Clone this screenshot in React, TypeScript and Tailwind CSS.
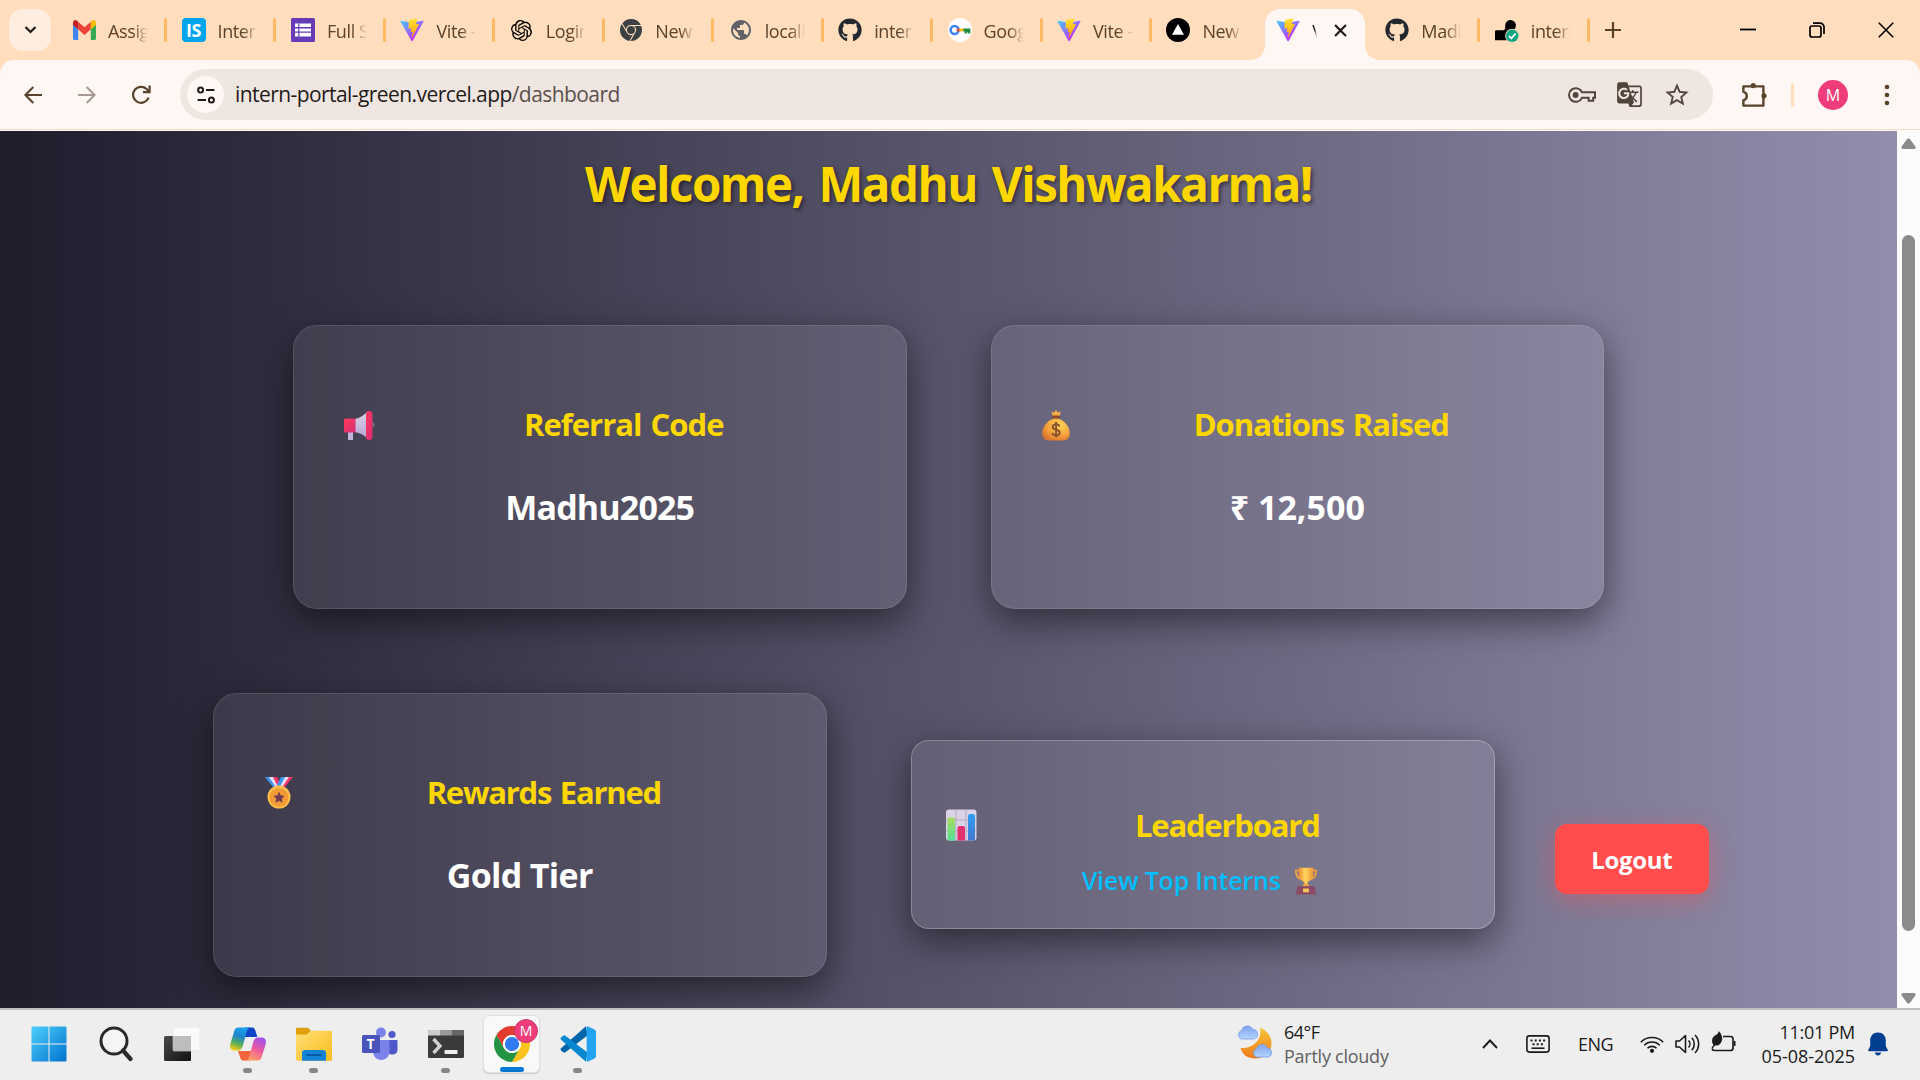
import type { ReactNode } from "react";
import { FaGithub } from "react-icons/fa";
import { SiOpenai, SiGooglechrome } from "react-icons/si";
import { MdPublic, MdGTranslate, MdStarBorder } from "react-icons/md";

/* ---------- tab icons ---------- */

function GmailIcon() {
  return (
    <svg viewBox="0 0 24 18" className="h-[20px] w-[23px]" preserveAspectRatio="none">
      <path d="M0 2.4V16.4C0 17.3.7 18 1.6 18H5.4V8.4z" fill="#4285F4" />
      <path d="M24 2.4V16.4c0 .9-.7 1.6-1.6 1.6H18.6V8.4z" fill="#34A853" />
      <path d="M5.4 8.4V1.6L12 6.6l6.6-5v6.8L12 13.4z" fill="#EA4335" />
      <path d="M0 2.5C0 .4 2.3-.7 4 .5l1.4 1.1v6.8L0 4.4z" fill="#C5221F" />
      <path d="M24 2.5C24 .4 21.7-.7 20 .5l-1.4 1.1v6.8L24 4.4z" fill="#FBBC04" />
    </svg>
  );
}

function InternshalaIcon() {
  return (
    <span className="flex size-6 items-center justify-center rounded-[4px] bg-[#00A5EC] text-[18px] font-bold leading-none tracking-[-0.5px] text-white">
      IS
    </span>
  );
}

function FormsIcon() {
  return (
    <svg viewBox="0 0 24 24" className="size-6">
      <rect width="24" height="24" rx="1.5" fill="#673AB7" />
      <rect x="4" y="5.5" width="16" height="13" fill="#fff" />
      <path d="M4 9.7h16M4 14.1h16" stroke="#673AB7" strokeWidth="1.4" />
      <path d="M7.8 5.5v13" stroke="#673AB7" strokeWidth="1.2" />
    </svg>
  );
}

function ViteIcon() {
  return (
    <svg viewBox="0 0 410 404" className="size-6">
      <defs>
        <linearGradient id="viteA" x1="6" y1="33" x2="235" y2="344" gradientUnits="userSpaceOnUse">
          <stop stopColor="#41D1FF" />
          <stop offset="1" stopColor="#BD34FE" />
        </linearGradient>
        <linearGradient id="viteB" x1="194" y1="9" x2="236" y2="293" gradientUnits="userSpaceOnUse">
          <stop stopColor="#FFEA83" />
          <stop offset="0.08" stopColor="#FFDD35" />
          <stop offset="1" stopColor="#FFA800" />
        </linearGradient>
      </defs>
      <path
        fill="url(#viteA)"
        d="M399.641 59.5246L215.643 388.545C211.844 395.338 202.084 395.378 198.228 388.618L10.5817 59.5563C6.38087 52.1896 12.6802 43.2665 21.0281 44.7586L205.223 77.6824C206.398 77.8924 207.601 77.8904 208.776 77.6763L389.119 44.8058C397.439 43.2894 403.768 52.1434 399.641 59.5246Z"
      />
      <path
        fill="url(#viteB)"
        d="M292.965 1.5744L156.801 28.2552C154.563 28.6937 152.906 30.5903 152.771 32.8664L144.395 174.33C144.198 177.662 147.258 180.248 150.51 179.498L188.42 170.749C191.967 169.931 195.172 173.055 194.443 176.622L183.18 231.775C182.422 235.487 185.907 238.661 189.532 237.56L212.947 230.446C216.577 229.344 220.065 232.527 219.297 236.242L201.398 322.875C200.278 328.294 207.486 331.249 210.492 326.603L212.5 323.5L323.454 102.072C325.312 98.3645 322.108 94.137 318.036 94.9228L279.014 102.454C275.347 103.161 272.227 99.746 273.262 96.1583L298.731 7.86689C299.767 4.27314 296.636 0.855181 292.965 1.5744Z"
      />
    </svg>
  );
}

function PasswordIcon() {
  return (
    <svg viewBox="0 0 24 24" className="size-6">
      <circle cx="12" cy="12" r="12" fill="#fff" />
      <circle cx="6.6" cy="12" r="4" fill="none" stroke="#4285F4" strokeWidth="2.6" />
      <path d="M8.6 10.6h3v2.8h-3z" fill="#EA4335" />
      <path d="M11.4 10.6h4.2v2.8h-4.2z" fill="#FBBC04" />
      <path d="M15.4 10.6h7v5h-2.2v-1.2h-1.4v1.2h-2.2v-2.2h-1.2z" fill="#1E8E3E" />
    </svg>
  );
}

function VercelIcon() {
  return (
    <svg viewBox="0 0 24 24" className="size-6">
      <circle cx="12" cy="12" r="12" fill="#000" />
      <path d="M12 6l6 10.8H6z" fill="#fff" />
    </svg>
  );
}

function RenderIcon() {
  return (
    <svg viewBox="0 0 24 24" className="size-6">
      <path d="M0 13.4q0-1.2 1.2-1.2h7q1.4 0 2-1.8V7a5.4 5.4 0 1 1 10.4 2.4L12 22.2H0z" fill="#000" />
      <circle cx="17.2" cy="17.8" r="7" fill="#FFDDBD" />
      <circle cx="17.2" cy="17.8" r="6.2" fill="#12A583" />
      <path d="M14 18l2.3 2.4 4.2-4.8" fill="none" stroke="#fff" strokeWidth="1.8" />
    </svg>
  );
}

const tabs: { icon: ReactNode; label: string; last?: boolean }[] = [
  { icon: <GmailIcon />, label: "Assig" },
  { icon: <InternshalaIcon />, label: "Intern" },
  { icon: <FormsIcon />, label: "Full S" },
  { icon: <ViteIcon />, label: "Vite -" },
  { icon: <SiOpenai className="size-[21px] text-black" />, label: "Login" },
  { icon: <SiGooglechrome className="size-[22px] text-[#3C4043]" />, label: "New" },
  { icon: <MdPublic className="size-[26px] text-[#5F6368]" />, label: "locall" },
  { icon: <FaGithub className="size-[24px] text-[#24292F]" />, label: "intern" },
  { icon: <PasswordIcon />, label: "Goog" },
  { icon: <ViteIcon />, label: "Vite -" },
  { icon: <VercelIcon />, label: "New", last: true },
];

const tabsAfter: { icon: ReactNode; label: string }[] = [
  { icon: <FaGithub className="size-[24px] text-[#24292F]" />, label: "Madh" },
  { icon: <RenderIcon />, label: "intern" },
];

function Tab({ icon, label, last }: { icon: ReactNode; label: string; last?: boolean }) {
  return (
    <div className="flex h-[60px] w-[109.45px] flex-none items-center">
      <span className="ml-[14.5px] flex w-6 flex-none items-center justify-center">{icon}</span>
      <span className="ml-[12px] mt-[3px] w-[40px] flex-none overflow-hidden whitespace-nowrap text-[18px] tracking-[-0.4px] text-[#5A432B] [mask-image:linear-gradient(to_right,#000_62%,transparent)]">
        {label}
      </span>
      {!last && <span className="ml-auto h-6 w-[3px] rounded-full bg-[#FFB962]" />}
    </div>
  );
}

function TabStrip() {
  return (
    <div className="flex h-[60px] bg-[#FFDDBD]">
      <div className="ml-[9px] mr-[6.6px] mt-[9px] flex h-[42px] w-[42px] flex-none items-center justify-center rounded-[14px] bg-[#FFEEDF]">
        <svg viewBox="0 0 12 8" className="h-[8px] w-[13px]" fill="none" stroke="#1F1A17" strokeWidth="2.2">
          <path d="M1 1l5 5 5-5" />
        </svg>
      </div>
      {tabs.map((t, i) => (
        <Tab key={i} {...t} />
      ))}
      <div className="relative h-[60px] w-[109.45px] flex-none pl-[3.4px]">
        <div className="mt-[9px] flex h-[51px] w-[100px] items-center rounded-t-[15px] bg-[#FFF7F4] pb-[9px]">
          <span className="ml-[11px] w-6 flex-none">
            <ViteIcon />
          </span>
          <span className="ml-[12.5px] mt-[3px] w-[5px] flex-none overflow-hidden text-[18px] text-[#1F1A17] [mask-image:linear-gradient(to_right,#000_50%,transparent)]">
            V
          </span>
          <svg viewBox="0 0 12 12" className="ml-[17px] size-[13px]" stroke="#1F1A17" strokeWidth="2">
            <path d="M1 1l10 10M11 1L1 11" />
          </svg>
        </div>
        <span className="absolute -left-[10.6px] bottom-0 size-[14px] bg-[radial-gradient(circle_at_top_left,transparent_13.5px,#FFF7F4_14px)]" />
        <span className="absolute bottom-0 left-[103.4px] size-[14px] bg-[radial-gradient(circle_at_top_right,transparent_13.5px,#FFF7F4_14px)]" />
      </div>
      {tabsAfter.map((t, i) => (
        <Tab key={i} {...t} />
      ))}
      <svg viewBox="0 0 16 16" className="ml-[15px] mt-[22px] size-4 flex-none" stroke="#5A432B" strokeWidth="2.2">
        <path d="M8 0v16M0 8h16" />
      </svg>
      <div className="ml-auto mr-[26.5px] flex items-center text-black">
        <svg viewBox="0 0 16 16" className="size-4" stroke="currentColor" strokeWidth="1.8">
          <path d="M0 7.5h16" />
        </svg>
        <svg viewBox="0 0 16 16" className="ml-[53px] size-4" fill="none" stroke="currentColor" strokeWidth="1.7">
          <rect x="1" y="4" width="11" height="11" rx="2" />
          <path d="M4 1.2h7.2a3.8 3.8 0 0 1 3.8 3.8v7" />
        </svg>
        <svg viewBox="0 0 16 16" className="ml-[53px] size-4" stroke="currentColor" strokeWidth="1.6">
          <path d="M.8.8l14.4 14.4M15.2.8L.8 15.2" />
        </svg>
      </div>
    </div>
  );
}

function Toolbar() {
  return (
    <div className="bg-[#FFDDBD]">
      <div className="flex h-[71px] items-center rounded-t-[14px] bg-[#FFF7F4] pb-[2px] shadow-[inset_0_-1px_0_#FFFCF6,inset_0_-2px_0_#EBDDCB]">
        <svg viewBox="0 0 18 18" className="ml-[24px] size-[18px]" fill="none" stroke="#5A432B" strokeWidth="2.1">
          <path d="M18 9H1.6M9.3 1L1.4 9l7.9 8" />
        </svg>
        <svg viewBox="0 0 18 18" className="ml-[36px] size-[18px]" fill="none" stroke="#A89A92" strokeWidth="2.1">
          <path d="M0 9h16.4M8.7 1l7.9 8-7.9 8" />
        </svg>
        <svg viewBox="0 0 19 19" className="ml-[36px] size-[19px]" fill="none" stroke="#5A432B" strokeWidth="2.2">
          <path d="M16.6 12.6A8 8 0 1 1 14.6 4L17 6.4" />
          <path d="M17.6.6v6.6H11" />
        </svg>
        <div className="ml-[29px] flex h-[51px] w-[1533px] flex-none items-center rounded-full bg-[#EFE6E2]">
          <span className="ml-[7px] flex size-[37px] items-center justify-center rounded-full bg-[#FFF7F4]">
            <svg viewBox="0 0 18 18" className="size-[18px]" fill="none" stroke="#1F1A17" strokeWidth="2">
              <circle cx="3.6" cy="4" r="2.5" />
              <path d="M9 4h8.4M.6 14H9" />
              <circle cx="14.4" cy="14" r="2.5" />
            </svg>
          </span>
          <span className="ml-[11px] mt-px whitespace-nowrap text-[21px] tracking-[-0.57px] text-[#1F1A17]">
            intern-portal-green.vercel.app<span className="text-[#5C504A]">/dashboard</span>
          </span>
          <div className="ml-auto mr-[22.5px] flex items-center text-[#51443B]">
            <svg viewBox="0 0 28 16" className="h-[16px] w-[28px]" fill="none" stroke="currentColor" strokeWidth="2">
              <path d="M14 5.2h13v5.6h-1.8v3h-4.6v-3H14a6.8 6.8 0 1 1 0-5.6z" />
              <circle cx="7.6" cy="8" r="2.9" fill="currentColor" stroke="none" />
            </svg>
            <MdGTranslate className="ml-[20px] size-[27px]" />
            <MdStarBorder className="ml-[20px] size-[28px]" />
          </div>
        </div>
        <svg viewBox="0 0 26 26" className="ml-[28px] size-[26px]" fill="none" stroke="#5A432B" strokeWidth="2.4" strokeLinejoin="round">
          <path d="M2.4 4.4h20v19.200h-20v-5.4a4.3 4.3 0 0 0 0-8.4z" />
          <circle cx="12.2" cy="3.6" r="2.6" fill="#5A432B" stroke="none" />
          <circle cx="23" cy="13.8" r="2.6" fill="#5A432B" stroke="none" />
        </svg>
        <span className="ml-[24px] h-6 w-[3px] rounded-full bg-[#FFDDBD]" />
        <span className="ml-[24px] flex size-[30px] items-center justify-center rounded-full bg-[#EE3D7A] text-[16px] text-white">
          M
        </span>
        <svg viewBox="0 0 6 22" className="ml-[36px] h-[22px] w-[6px]" fill="#5A432B">
          <circle cx="3" cy="3" r="2.3" />
          <circle cx="3" cy="11" r="2.3" />
          <circle cx="3" cy="19" r="2.3" />
        </svg>
      </div>
    </div>
  );
}

/* ---------- card pictograms ---------- */

function Megaphone() {
  return (
    <svg viewBox="0 0 32 32" className="size-8">
      <defs>
        <linearGradient id="mgRed" x1="0" y1="0" x2="1" y2="1">
          <stop stopColor="#FF3B5F" />
          <stop offset="1" stopColor="#D62C74" />
        </linearGradient>
        <linearGradient id="mgCone" x1="0" y1="0" x2="0" y2="1">
          <stop stopColor="#D9D3E4" />
          <stop offset="1" stopColor="#B9A3D6" />
        </linearGradient>
      </defs>
      <ellipse cx="30" cy="15.5" rx="1.8" ry="2.6" fill="#6E6780" />
      <rect x="5" y="22" width="5" height="9" fill="#C2B3DD" />
      <path d="M12 10C17 9 21 6 24 3v26c-3-3-7-5-12-6z" fill="url(#mgCone)" />
      <path d="M2.4 9.5H12.5v14H2.4Q1 23.5 1 22V11q0-1.5 1.4-1.5z" fill="url(#mgRed)" />
      <rect x="23" y="2" width="6.5" height="29" rx="3.2" fill="url(#mgRed)" />
    </svg>
  );
}

function MoneyBag() {
  return (
    <svg viewBox="0 0 32 32" className="size-8">
      <defs>
        <radialGradient id="mbBody" cx="0.65" cy="0.3" r="0.8">
          <stop stopColor="#FFD558" />
          <stop offset="0.55" stopColor="#F7A63C" />
          <stop offset="1" stopColor="#D9702F" />
        </radialGradient>
      </defs>
      <path d="M10.5 2.5l2.5 1 2-2.5 2 2.5 2.8-1-1.3 5h-6.8z" fill="#F3AE48" />
      <path d="M15 9C8 10 1.2 17 1.2 24c0 4.5 2.3 7.5 6 7.5h15.6c3.7 0 6-3 6-7.500C28.8 17 22 10 15 9z" fill="url(#mbBody)" />
      <rect x="11" y="6.6" width="8" height="2.8" rx="1.4" fill="#8C4B2C" />
      <path
        d="M18.6 17.4c-.4-1.6-1.9-2.2-3.5-2.2-2 0-3.5 1-3.5 2.7 0 3.8 7.2 1.9 7.2 5.7 0 1.8-1.6 2.8-3.7 2.8-1.9 0-3.4-.8-3.8-2.5M15.1 13v15.6"
        fill="none"
        stroke="#85502E"
        strokeWidth="1.9"
      />
    </svg>
  );
}

function Medal() {
  return (
    <svg viewBox="0 0 32 32" className="size-8">
      <path d="M2 0h6l8 10h-6z" fill="#3F96EE" />
      <path d="M6 0h5l6 9h-5z" fill="#E9DDF7" />
      <path d="M10 0h4l4 8-3 2z" fill="#F0356B" />
      <path d="M30 0h-5l-8 10h5z" fill="#F0356B" />
      <path d="M26 0h-5l-6 9h5z" fill="#E9DDF7" />
      <path d="M22 0h-4l-4 8 3 1.5z" fill="#3F96EE" />
      <circle cx="16" cy="20" r="11.5" fill="#FFC04E" />
      <circle cx="16" cy="20.5" r="9.5" fill="#F39A36" />
      <path d="M16 15.5l1.5 3.300 3.500.4-2.600 2.400.7 3.500-3.100-1.700-3.100 1.700.7-3.500-2.600-2.400 3.500-.4z" fill="#713A52" stroke="#713A52" strokeWidth=".8" strokeLinejoin="round" />
    </svg>
  );
}

function BarChart() {
  return (
    <svg viewBox="0 0 32 32" className="size-8">
      <defs>
        <linearGradient id="bcGreen" x1="0" y1="0" x2="0" y2="1">
          <stop stopColor="#A6DB5C" />
          <stop offset="1" stopColor="#57DE96" />
        </linearGradient>
        <linearGradient id="bcBlue" x1="0" y1="0" x2="0" y2="1">
          <stop stopColor="#2F9FF2" />
          <stop offset="1" stopColor="#4377CE" />
        </linearGradient>
      </defs>
      <rect x="1" y="0.5" width="30.5" height="31" rx="3" fill="#DAD4E6" />
      <path d="M11 1v30M21 1v30M1 11h30M1 22h30" stroke="#B4AAC6" strokeWidth="1" />
      <path d="M2.5 10.5q0-2 2-2h3.500q2 0 2 2v21H2.500z" fill="url(#bcGreen)" />
      <path d="M12.5 19q0-2 2-2h3.500q2 0 2 2v12.500H12.500z" fill="#E2316F" />
      <path d="M23 7q0-2 2-2h3q2 0 2 2v24.500h-7z" fill="url(#bcBlue)" />
    </svg>
  );
}

function Trophy() {
  return (
    <svg viewBox="0 0 24 28" className="h-[28px] w-[24px]">
      <defs>
        <linearGradient id="tpCup" x1="0" y1="0" x2="1" y2="0">
          <stop stopColor="#E58A38" />
          <stop offset="0.45" stopColor="#FFD65C" />
          <stop offset="1" stopColor="#EE9238" />
        </linearGradient>
      </defs>
      <path d="M5.5 3.5H1.8c0 5 1.2 7.5 5 8.5M18.5 3.5h3.7c0 5-1.2 7.5-5 8.5" fill="none" stroke="#F5A53E" strokeWidth="1.7" />
      <path d="M4.5.8h15V7c0 4.5-3 7.3-6 8v3.5h-3V15c-3-.7-6-3.5-6-8z" fill="url(#tpCup)" />
      <rect x="9" y="17" width="6" height="2.5" rx="1" fill="#F2A13D" />
      <path d="M3.2 19.2h17.6l1 8.3H2.2z" fill="#8D4A63" />
      <rect x="9" y="21.5" width="6" height="3.8" rx=".6" fill="#F6C65B" />
    </svg>
  );
}

/* ---------- dashboard ---------- */

const cardShell =
  "flex flex-none flex-col border bg-white/[0.08] shadow-[0_12px_36px_rgba(0,0,0,0.5)]";

function StatCard({ icon, title, value, titleClass, valueClass }: { icon: ReactNode; title: string; value: string; titleClass: string; valueClass: string }) {
  return (
    <section className={`${cardShell} h-[284px] w-[613.5px] rounded-[24px] border-white/10 px-[48px] pt-[76px]`}>
      <div className="flex h-[44px] items-center">
        <span className="mr-[14px] mt-px w-[34px] flex-none pl-px">{icon}</span>
        <h3 className={`flex-1 text-center text-[31px] font-bold leading-none text-[#FFD700] [word-spacing:2px] ${titleClass}`}>{title}</h3>
      </div>
      <p className={`mt-[37px] flex h-[48px] items-center justify-center text-[34px] font-bold text-white ${valueClass}`}>{value}</p>
    </section>
  );
}

function Dashboard() {
  return (
    <main className="h-[877px] w-[1897px] flex-none overflow-hidden bg-[linear-gradient(to_right,#1f1c2c,#928dab)]">
      <h1 className="mt-[21px] flex h-[64px] items-center justify-center text-[47.5px] font-bold tracking-[-1.5px] text-[#FFD700] [text-shadow:2px_2px_4px_rgba(0,0,0,0.5)] [word-spacing:4px]">
        Welcome, Madhu Vishwakarma!
      </h1>
      <div className="mt-[109px] flex justify-center gap-[84px]">
        <StatCard icon={<Megaphone />} title="Referral Code" value="Madhu2025" titleClass="tracking-[-0.98px]" valueClass="tracking-[-0.85px]" />
        <StatCard icon={<MoneyBag />} title="Donations Raised" value="₹ 12,500" titleClass="tracking-[-1px]" valueClass="" />
      </div>
      <div className="ml-[213px] mt-[84px] flex items-center">
        <StatCard icon={<Medal />} title="Rewards Earned" value="Gold Tier" titleClass="tracking-[-1.25px]" valueClass="tracking-[-0.65px]" />
        <section className={`${cardShell} -mt-[2px] ml-[84px] h-[189px] w-[584.5px] rounded-[18px] border-white/25 px-[33px] pt-[62px]`}>
          <div className="flex h-[44px] items-center">
            <span className="mr-[15px] w-[34px] flex-none">
              <BarChart />
            </span>
            <h3 className="mt-px flex-1 text-center text-[31px] font-bold leading-none tracking-[-1.2px] text-[#FFD700]">Leaderboard</h3>
          </div>
          <a className="mr-[6px] mt-[16px] flex h-[36px] items-center justify-center whitespace-nowrap text-[25px] font-semibold tracking-[-0.18px] text-[#00BFFF]">
            View Top Interns
            <span className="ml-[13px]">
              <Trophy />
            </span>
          </a>
        </section>
        <button className="ml-[60px] mt-[48px] h-[70px] w-[153.5px] flex-none rounded-[12px] bg-[#FF4D4D] pt-[2px] text-[24px] font-bold tracking-[-0.3px] text-white shadow-[0_6px_24px_rgba(255,77,77,0.4)]">
          Logout
        </button>
      </div>
    </main>
  );
}

function ScrollArrow() {
  return (
    <svg viewBox="0 0 15 11" className="h-[11px] w-[15px]" fill="#8B8B8B">
      <path d="M6.2 1Q7.5-.6 8.8 1l5.600 7.600Q15.200 10.800 13 11H2Q-.2 10.800.6 8.600z" />
    </svg>
  );
}

function Scrollbar() {
  return (
    <div className="flex h-[877px] w-[23px] flex-col items-center bg-[#FCFCFC] pr-px">
      <span className="mt-[7px]">
        <ScrollArrow />
      </span>
      <span className="mt-[86px] h-[696px] w-[13px] rounded-full bg-[#8B8B8B]" />
      <span className="mt-[62px] rotate-180">
        <ScrollArrow />
      </span>
    </div>
  );
}

/* ---------- taskbar ---------- */

function WindowsIcon() {
  return (
    <svg viewBox="0 0 36 36" className="mr-[2px] size-[36px]">
      <defs>
        <linearGradient id="winG" x1="0" y1="0" x2="36" y2="36" gradientUnits="userSpaceOnUse">
          <stop stopColor="#4FD0FA" />
          <stop offset="1" stopColor="#0072D0" />
        </linearGradient>
      </defs>
      <path d="M1.5.5H17.5v17H.5v-16q0-1 1-1zM18.5.5h16q1 0 1 1v16h-17zM.5 18.500h17v17h-16q-1 0-1-1zM18.5 18.500h17v16q0 1-1 1h-16z" fill="url(#winG)" />
    </svg>
  );
}

function SearchIcon() {
  return (
    <svg viewBox="0 0 34 36" className="h-[36px] w-[34px]" fill="none" stroke="#2A2A2A">
      <circle cx="15" cy="15" r="13" strokeWidth="3" fill="#F5F5F5" />
      <path d="M24 24.5l7.5 8.5" strokeWidth="4.2" strokeLinecap="round" />
    </svg>
  );
}

function TaskViewIcon() {
  return (
    <svg viewBox="0 0 36 36" className="size-[36px]">
      <defs>
        <linearGradient id="tvD" x1="0" y1="0" x2="1" y2="1">
          <stop stopColor="#4A4A4A" />
          <stop offset="1" stopColor="#111" />
        </linearGradient>
      </defs>
      <rect x="0" y="10" width="27" height="25" rx="1.5" fill="url(#tvD)" />
      <rect x="9" y="1" width="27" height="24" rx="1.5" fill="#FAFAFA" stroke="#DDD" strokeWidth=".6" />
      <path d="M9 10h18v15H10.5Q9 25 9 23.5z" fill="#BDBDBD" />
    </svg>
  );
}

function CopilotIcon() {
  return (
    <svg viewBox="0 0 36 34" className="h-[34px] w-[36px]">
      <defs>
        <linearGradient id="cpA" x1="0.6" y1="0" x2="0.3" y2="1">
          <stop stopColor="#1AA0EE" />
          <stop offset="0.4" stopColor="#1E87C8" />
          <stop offset="0.7" stopColor="#56AE5C" />
          <stop offset="1" stopColor="#F5CB1B" />
        </linearGradient>
        <linearGradient id="cpB" x1="0.7" y1="0" x2="0.3" y2="1">
          <stop stopColor="#A250F0" />
          <stop offset="0.5" stopColor="#EE5A9C" />
          <stop offset="1" stopColor="#FFA168" />
        </linearGradient>
      </defs>
      <path d="M15 .5h6.500c3 0 3.600 2 4.500 5l1.300 4.500H20l-6 0z" fill="#1244C8" />
      <path d="M21 33.500h-7c-3 0-3.600-2-4.500-5L8 24h9l5 0z" fill="#F1643C" />
      <path d="M8.500.5H20c-2 .6-2.800 2.500-3.500 5L13 18c-1 3.500-2 5.500-5 5.500H4.500C0 23.500-.5 20 .6 16L4 5C5 1.500 6 .5 8.500.5z" fill="url(#cpA)" />
      <path d="M27.500 33.500H16c2-.6 2.800-2.500 3.500-5L23 16c1-3.500 2-5.500 5-5.500h3.500c4.500 0 5 3.500 3.900 7.500L32 29c-1 3.500-2 4.500-4.500 4.500z" fill="url(#cpB)" />
    </svg>
  );
}

function FolderIcon() {
  return (
    <svg viewBox="0 0 36 34" className="h-[34px] w-[36px]">
      <defs>
        <linearGradient id="fdY" x1="0" y1="0" x2="1" y2="1">
          <stop stopColor="#FFDF77" />
          <stop offset="1" stopColor="#FBBC1C" />
        </linearGradient>
      </defs>
      <path d="M0 2Q0 .8 1.2.8H11q1 0 2 1l2.500 2.500-5 4H0z" fill="#E0A009" />
      <path d="M0 7.500h9.500q1.500 0 2.500-1l2-2q1-.8 2-.8h18.500q1.500 0 1.500 1.300v27.500q0 1.200-1.200 1.200H1.200Q0 33.700 0 32.500z" fill="url(#fdY)" />
      <path d="M6 33.700V26q0-3 3-3h18q3 0 3 3v7.700z" fill="#1283D6" />
      <path d="M11 28.200h14" stroke="#0A559E" strokeWidth="1.800" strokeLinecap="round" />
    </svg>
  );
}

function TeamsIcon() {
  return (
    <span className="relative">
      <svg viewBox="0 0 36 34" className="h-[34px] w-[36px]">
        <circle cx="30" cy="7.500" r="3.600" fill="#5059C9" />
        <circle cx="19" cy="5.500" r="5" fill="#7B83EB" />
        <path d="M25 13h9.500q1 0 1 1v8.500q0 5-5.500 5-4 0-5-3z" fill="#5059C9" />
        <path d="M11 13h15q1.500 0 1.500 1.500v9c0 6-3.500 9.500-8.300 9.500S11 29.500 11 23.500z" fill="#7B83EB" />
        <rect x="0" y="8" width="18" height="18" rx="1.500" fill="#4B53BC" />
      </svg>
      <span className="absolute left-0 top-[8px] flex size-[18px] items-center justify-center text-[14px] font-bold leading-none text-white">T</span>
    </span>
  );
}

function TerminalIcon() {
  return (
    <svg viewBox="0 0 36 28" className="h-[28px] w-[36px]">
      <rect width="36" height="28" rx="1.500" fill="#3A3A3A" />
      <path d="M1.500 0H12v5.500H0v-4Q0 0 1.500 0z" fill="#CCC" />
      <path d="M12 0h12v5.500H12z" fill="#999" />
      <path d="M24 0h10.500Q36 0 36 1.500v4H24z" fill="#666" />
      <path d="M5.500 9l6.500 7-6.500 7" fill="none" stroke="#D0D0D0" strokeWidth="3.400" />
      <rect x="16.500" y="20" width="13" height="4" rx=".8" fill="#EEE" />
    </svg>
  );
}

function ChromeIcon() {
  return (
    <svg viewBox="2 2 44 44" className="size-[36px]">
      <path d="M4.950 13A22 22 0 0 1 43.050 13L24 13A11 11 0 0 0 14.470 29.500Z" fill="#E33B2E" />
      <path d="M43.050 13A22 22 0 0 1 24 46L33.530 29.500A11 11 0 0 0 24 13Z" fill="#FCC31E" />
      <path d="M24 46A22 22 0 0 1 4.950 13L14.470 29.500A11 11 0 0 0 33.530 29.500Z" fill="#229342" />
      <circle cx="24" cy="24" r="11" fill="#fff" />
      <circle cx="24" cy="24" r="8.700" fill="#2F7BEF" />
    </svg>
  );
}

function VsCodeIcon() {
  return (
    <svg viewBox="0 0 100 100" className="size-[36px]">
      <path d="M72 1L3 62q-3 3 0 6l6 5q3 2 6 0l62-47z" fill="#0065A9" />
      <path d="M72 99L3 38q-3-3 0-6l6-5q3-2 6 0l62 47z" fill="#0786D2" />
      <path d="M75 0l21 10q4 2 4 6v68q0 4-4 6l-21 10q-1-3-1-6V6q0-3 1-6z" fill="#23A4F3" />
    </svg>
  );
}

const apps: { icon: ReactNode; running?: boolean }[] = [
  { icon: <WindowsIcon /> },
  { icon: <SearchIcon /> },
  { icon: <TaskViewIcon /> },
  { icon: <CopilotIcon />, running: true },
  { icon: <FolderIcon />, running: true },
  { icon: <TeamsIcon /> },
  { icon: <TerminalIcon />, running: true },
];

function AppCell({ icon, running }: { icon: ReactNode; running?: boolean }) {
  return (
    <div className="relative flex h-[70px] w-[66px] flex-none items-center justify-center pb-[3px]">
      {icon}
      {running && <span className="absolute bottom-[7px] left-[28.5px] h-[5px] w-[9px] rounded-full bg-[#868686]" />}
    </div>
  );
}

function Weather() {
  return (
    <svg viewBox="0 0 36 34" className="h-[34px] w-[36px]">
      <defs>
        <linearGradient id="moon" x1="0" y1="0" x2="0" y2="1">
          <stop stopColor="#F8C537" />
          <stop offset="1" stopColor="#EE7B1C" />
        </linearGradient>
        <linearGradient id="cld" x1="0" y1="0" x2="0" y2="1">
          <stop stopColor="#7FA4F2" />
          <stop offset="1" stopColor="#B5D3FA" />
        </linearGradient>
      </defs>
      <path d="M23 2.500c7 3 11.500 9 11.500 15.500C34.500 27 28 33.500 18 33.500c-7 0-12.500-3.500-14.500-10.500C14 24 26 16 23 2.500z" fill="url(#moon)" />
      <path d="M4.500 14a4.500 4.500 0 0 1 0-8.500A6 6 0 0 1 15.800 4.500a4.800 4.800 0 0 1 1 9.500z" fill="url(#cld)" stroke="#6F96E8" strokeWidth=".7" />
      <path d="M19.500 32a4.300 4.300 0 0 1 0-8.200A5.800 5.800 0 0 1 30.500 23a4.600 4.600 0 0 1 .8 9z" fill="url(#cld)" stroke="#6F96E8" strokeWidth=".7" />
    </svg>
  );
}

function Taskbar() {
  return (
    <footer className="flex h-[72px] items-center border-t-2 border-[#BDBDBD] bg-[#EEEEEE] pb-[2px] text-[18px] text-[#1B1B1B]">
      <div className="ml-[16.5px] mt-[2px] flex h-[70px] items-center">
        {apps.map((a, i) => (
          <AppCell key={i} {...a} />
        ))}
        <div className="flex w-[66px] justify-center">
          <div className="relative mt-[-3px] flex h-[58px] w-[57px] items-center justify-center rounded-[6px] border border-[#E0E0E0] bg-[#F9F9F9] shadow-[0_1px_1px_#C8C8C8]">
            <ChromeIcon />
            <span className="absolute left-[30px] top-[3px] flex size-[24px] items-center justify-center rounded-full border border-[#C93A6B] bg-[#EE3D7A] text-[14px] leading-none text-white">
              M
            </span>
            <span className="absolute bottom-0 h-[5px] w-[24px] rounded-full bg-[#0078D4]" />
          </div>
        </div>
        <AppCell icon={<VsCodeIcon />} running />
      </div>
      <div className="ml-[626.5px] mt-[-4px]">
        <Weather />
      </div>
      <div className="ml-[11px] w-[120px] whitespace-nowrap leading-[24px]">
        <div className="tracking-[-0.5px]">64°F</div>
        <div className="tracking-[-0.25px] text-[#5F5F5F]">Partly cloudy</div>
      </div>
      <svg viewBox="0 0 16 10" className="ml-[78px] h-[10px] w-[16px]" fill="none" stroke="#1B1B1B" strokeWidth="1.900">
        <path d="M1 9l7-7.500L15 9" />
      </svg>
      <svg viewBox="0 0 24 18" className="ml-[28px] h-[18px] w-[24px]" fill="none" stroke="#1B1B1B" strokeWidth="1.600">
        <rect x=".9" y=".9" width="22.200" height="16.200" rx="2.500" />
        <path d="M4.500 5.500h15M6.500 9.300h11" strokeDasharray="2 2.200" strokeWidth="2" />
        <path d="M5.500 13.200h13" />
      </svg>
      <span className="ml-[28px] w-[36px] tracking-[-0.5px]">ENG</span>
      <svg viewBox="0 0 24 18" className="ml-[26px] h-[18px] w-[24px]" fill="none" stroke="#1B1B1B" strokeWidth="1.600">
        <path d="M.8 7.200a15.800 15.800 0 0 1 22.400 0M4.200 10.200a11 11 0 0 1 15.600 0M7.500 13.200a6.400 6.400 0 0 1 9 0" />
        <circle cx="12" cy="15.800" r="2.100" fill="#1B1B1B" stroke="none" />
      </svg>
      <svg viewBox="0 0 25 20" className="ml-[11px] h-[20px] w-[25px]" fill="none" stroke="#1B1B1B" strokeWidth="1.600">
        <path d="M1 7h3.500L10.500 1.500v17L4.500 13H1z" strokeLinejoin="round" />
        <path d="M13.500 6.500a5 5 0 0 1 0 7M16.800 3.800a9 9 0 0 1 0 12.400M20 1a13 13 0 0 1 0 18" />
      </svg>
      <svg viewBox="0 0 25 21" className="ml-[11px] mt-[-5px] h-[21px] w-[25px]" fill="none" stroke="#1B1B1B" strokeWidth="1.700">
        <path d="M12 5.500h7.500q2.500 0 2.500 2.500v9q0 2.500-2.500 2.500H3.500q-2 0-2.500-2" />
        <path d="M23 10h1.500v5H23z" fill="#1B1B1B" stroke="none" />
        <path d="M7.800 0c3.700 4 4.500 8.500 1.800 12.200-1.400 2-3.600 2.600-5.600 2.200l-2.400 3.200-1.100-.9 2-2.700C-.3 10.500 1.200 5.600 4.400 4.200 6.400 3.300 7.600 2 7.800 0z" fill="#1B1B1B" stroke="none" />
      </svg>
      <div className="ml-auto mr-[13px] whitespace-nowrap text-right leading-[24px]">
        <div className="tracking-[-0.25px]">11:01 PM</div>
        <div className="tracking-[-0.05px]">05-08-2025</div>
      </div>
      <svg viewBox="0 0 20 24" className="mr-[32px] h-[24px] w-[20px]" fill="#003E92">
        <path d="M10 .5c4.800 0 7.800 3.400 7.800 8v5.500l2 4q.4 1.300-1 1.300H1.200q-1.400 0-1-1.300l2-4V8.500c0-4.600 3-8 7.800-8zM6.800 20.500h6.400q-.8 3-3.200 3t-3.200-3z" />
      </svg>
    </footer>
  );
}

export default function App() {
  return (
    <div className="flex h-[1080px] w-[1920px] flex-col overflow-hidden font-['Open_Sans','Noto_Sans',sans-serif]">
      <TabStrip />
      <Toolbar />
      <div className="flex h-[877px]">
        <Dashboard />
        <Scrollbar />
      </div>
      <Taskbar />
    </div>
  );
}
